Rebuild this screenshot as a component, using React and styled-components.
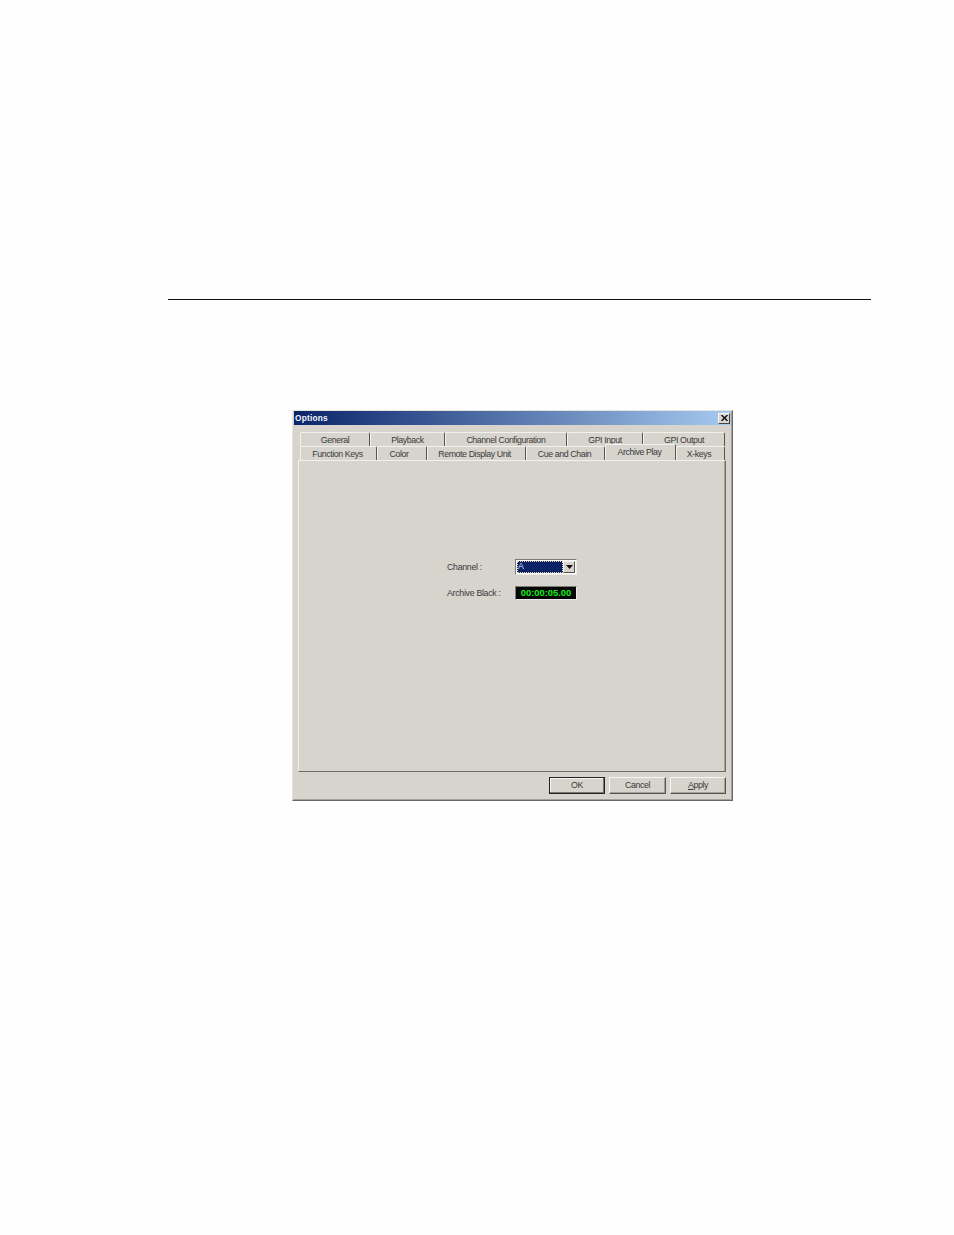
import styled, { createGlobalStyle } from 'styled-components'

const GlobalStyle = createGlobalStyle`
    html, body {
        margin: 0;
        padding: 0;
        background: #fefefe;
    }
`

const Page = styled.div`
    width: 954px;
    height: 1235px;
    padding-top: 299px;
    box-sizing: border-box;
    overflow: hidden;
    font-family: "Liberation Sans", Arial, sans-serif;
    color: #2a2a2a;
`

const Rule = styled.hr`
    width: 703px;
    height: 1px;
    margin: 0 0 110px 168px;
    border: 0;
    background: #111;
`

const Dialog = styled.div`
    width: 441px;
    height: 391px;
    margin-left: 292px;
    padding: 0 1px 2px 1px;
    box-sizing: border-box;
    display: flex;
    flex-direction: column;
    background: #d6d4cd;
    border: 1px solid;
    border-color: #e4e3de #6a6964 #6a6964 #e4e3de;
    box-shadow: inset -1px -1px 0 #a3a19b;
`

const TitleBar = styled.div`
    height: 14px;
    padding: 0 1px;
    display: flex;
    align-items: center;
    justify-content: space-between;
    background: linear-gradient(90deg, #0a246a 0%, #a6caf0 100%);
`

const Title = styled.span`
    font-size: 8.3px;
    font-weight: bold;
    color: #f2f4fa;
    letter-spacing: 0.2px;
`

const CloseButton = styled.button`
    width: 12px;
    height: 11px;
    padding: 0;
    display: flex;
    align-items: center;
    justify-content: center;
    background: #d6d4cd;
    border: 1px solid;
    border-color: #f5f5f2 #44433f #44433f #f5f5f2;
`

const TabArea = styled.div`
    margin: 7px 0 0 4px;
    width: 428px;
`

const TabRow = styled.div`
    display: flex;
    height: 14px;
    padding-left: 2px;
`

const Tab = styled.div`
    width: ${p => p.$width}px;
    box-sizing: border-box;
    display: flex;
    align-items: center;
    justify-content: center;
    padding-right: ${p => p.$inset || 0}px;
    font-size: 8.8px;
    letter-spacing: -0.4px;
    color: #3a3a3a;
    border-top: 1px solid #f2f1ed;
    border-left: 1px solid #f2f1ed;
    border-right: 1px solid #55544f;
    border-top-left-radius: 2px;
    border-top-right-radius: 2px;
    ${p => p.$active && `
        height: 16px;
        margin-top: -2px;
        padding-bottom: 2px;
        position: relative;
        background: #d6d4cd;
    `}
`

const TabPanel = styled.div`
    height: 312px;
    box-sizing: border-box;
    display: flex;
    flex-direction: column;
    align-items: flex-start;
    padding: 99px 0 0 148px;
    gap: 12px;
    background: #d6d4cd;
    border: 1px solid;
    border-color: #f2f1ed #6e6d68 #6e6d68 #f2f1ed;
    box-shadow: inset -1px 0 0 #a3a19b;
`

const FieldRow = styled.div`
    display: flex;
    align-items: center;
    height: 14px;
`

const FieldLabel = styled.label`
    width: 68px;
    font-size: 8.8px;
    letter-spacing: -0.3px;
    color: #3a3a3a;
`

const Select = styled.div`
    width: 62px;
    height: 16px;
    box-sizing: border-box;
    display: flex;
    align-items: stretch;
    padding: 1px;
    background: #fafaf8;
    border: 1px solid;
    border-color: #7d7b76 #ecebe7 #ecebe7 #7d7b76;
`

const SelectValue = styled.div`
    flex: 1;
    padding-left: 1px;
    font-size: 8.8px;
    line-height: 10px;
    color: #d5dbee;
    background: #0b2267;
    outline: 1px dotted #e8d9a0;
    outline-offset: -1px;
`

const SelectArrow = styled.div`
    width: 12px;
    display: flex;
    align-items: center;
    justify-content: center;
    background: #d6d4cd;
    border: 1px solid;
    border-color: #f5f5f2 #55544f #55544f #f5f5f2;
    box-sizing: border-box;
`

const Timecode = styled.div`
    width: 62px;
    height: 14px;
    padding-bottom: 1px;
    box-sizing: border-box;
    display: flex;
    align-items: center;
    justify-content: center;
    font-size: 9.4px;
    font-weight: bold;
    color: #14f01c;
    background: #050505;
    border: 1px solid;
    border-color: #7d7b76 #ecebe7 #ecebe7 #7d7b76;
`

const ButtonBar = styled.div`
    display: flex;
    justify-content: flex-end;
    gap: 4px;
    margin-top: 5px;
`

const DialogButton = styled.button`
    width: ${p => p.$width}px;
    height: 17px;
    padding: 0 0 2px;
    box-sizing: border-box;
    font-family: inherit;
    font-size: 8.8px;
    letter-spacing: -0.4px;
    color: #3a3a3a;
    background: #d6d4cd;
    border: 1px solid;
    border-color: ${p => p.$primary ? '#222' : '#f5f5f2 #55544f #55544f #f5f5f2'};
    box-shadow: ${p => p.$primary ? 'inset -1px -1px 0 #77756f, inset 1px 1px 0 #f5f5f2' : 'inset -1px -1px 0 #a3a19b'};
`

const Mnemonic = styled.span`
    text-decoration: underline;
`

const topTabs = [
    { label: 'General', width: 70 },
    { label: 'Playback', width: 75 },
    { label: 'Channel Configuration', width: 122 },
    { label: 'GPI Input', width: 76 },
    { label: 'GPI Output', width: 82 },
]

const bottomTabs = [
    { label: 'Function Keys', width: 77, inset: 2 },
    { label: 'Color', width: 50, inset: 6 },
    { label: 'Remote Display Unit', width: 99, inset: 4 },
    { label: 'Cue and Chain', width: 79, inset: 2 },
    { label: 'Archive Play', width: 71, inset: 2, active: true },
    { label: 'X-keys', width: 49, inset: 3 },
]

export default function App() {
    return (
        <Page>
            <GlobalStyle />
            <Rule />
            <Dialog>
                <TitleBar>
                    <Title>Options</Title>
                    <CloseButton aria-label="Close">
                        <svg width="7" height="6" viewBox="0 0 7 6">
                            <path d="M0.5 0 L6.5 6 M6.5 0 L0.5 6" stroke="#111" strokeWidth="1.4" />
                        </svg>
                    </CloseButton>
                </TitleBar>
                <TabArea>
                    <TabRow>
                        {topTabs.map(tab => (
                            <Tab key={tab.label} $width={tab.width}>{tab.label}</Tab>
                        ))}
                    </TabRow>
                    <TabRow>
                        {bottomTabs.map(tab => (
                            <Tab key={tab.label} $width={tab.width} $inset={tab.inset} $active={tab.active}>{tab.label}</Tab>
                        ))}
                    </TabRow>
                    <TabPanel>
                        <FieldRow>
                            <FieldLabel>Channel :</FieldLabel>
                            <Select>
                                <SelectValue>A</SelectValue>
                                <SelectArrow>
                                    <svg width="7" height="4" viewBox="0 0 7 4">
                                        <path d="M0 0 H7 L3.5 4 Z" fill="#111" />
                                    </svg>
                                </SelectArrow>
                            </Select>
                        </FieldRow>
                        <FieldRow>
                            <FieldLabel>Archive Black :</FieldLabel>
                            <Timecode>00:00:05.00</Timecode>
                        </FieldRow>
                    </TabPanel>
                    <ButtonBar>
                        <DialogButton $width={56} $primary>OK</DialogButton>
                        <DialogButton $width={57}>Cancel</DialogButton>
                        <DialogButton $width={56}><Mnemonic>A</Mnemonic>pply</DialogButton>
                    </ButtonBar>
                </TabArea>
            </Dialog>
        </Page>
    )
}
